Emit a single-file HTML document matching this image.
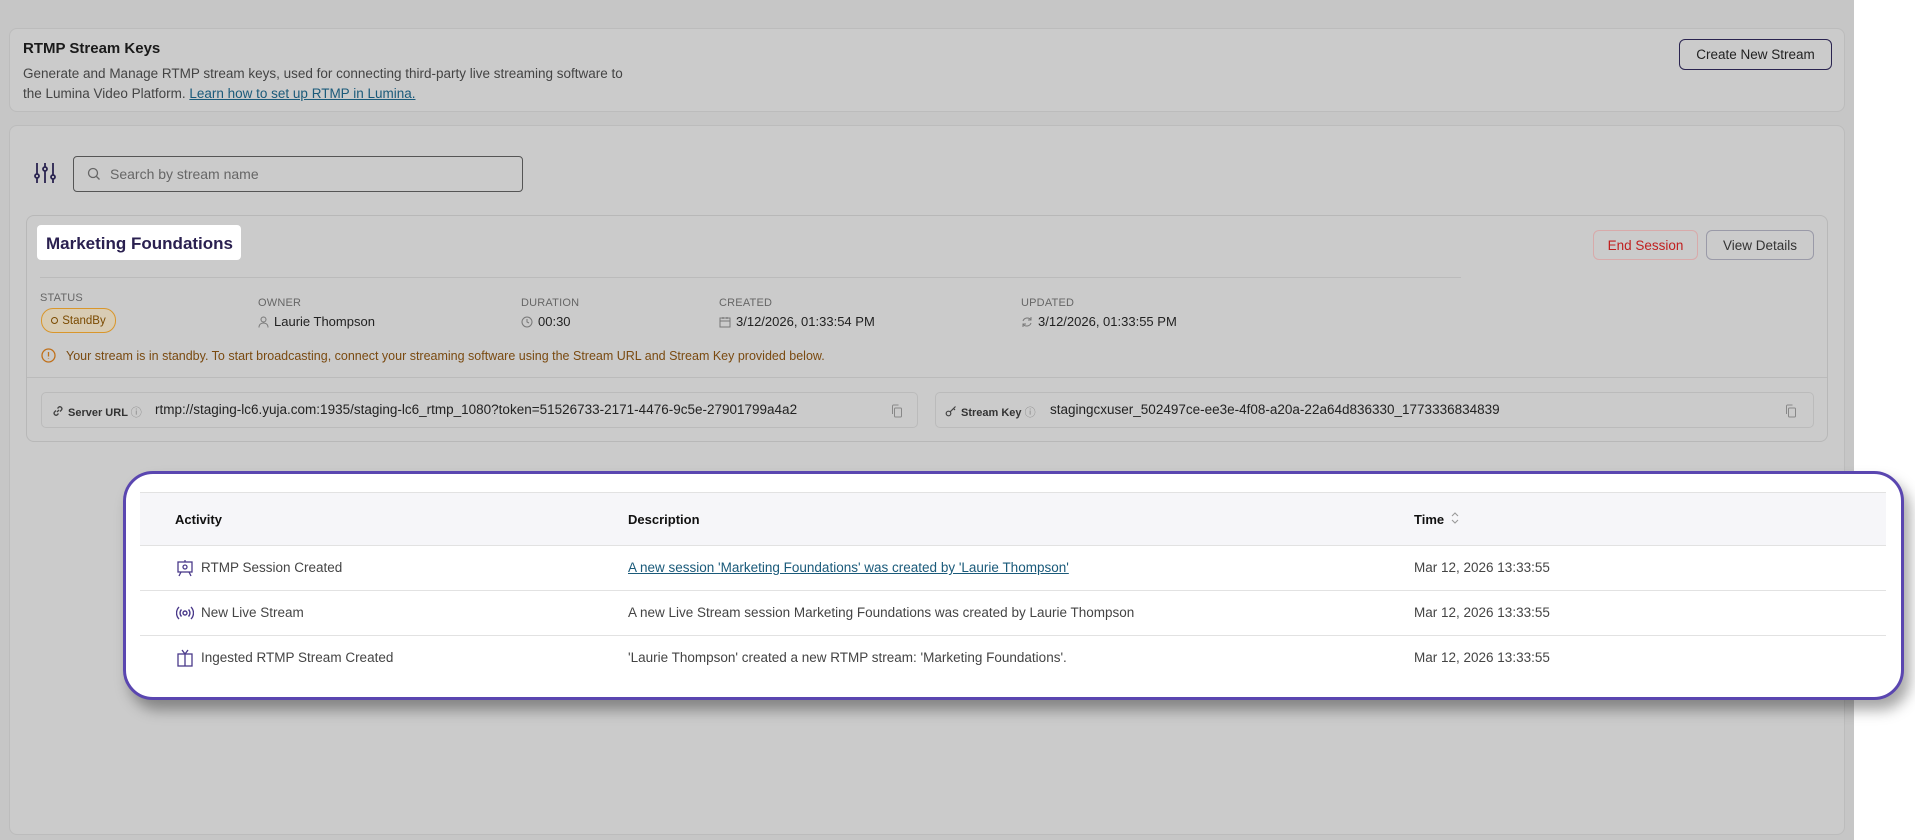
<!DOCTYPE html>
<html><head><meta charset="utf-8"><style>
*{box-sizing:border-box;margin:0;padding:0}
body{width:1915px;height:840px;overflow:hidden;background:#c6c6c6;font-family:"Liberation Sans",sans-serif;position:relative;color:#333}
.a{position:absolute}
.strip{left:1854px;top:0;width:61px;height:840px;background:#fff}
.card{background:#cbcbcb;border:1px solid #bcbcbc;border-radius:8px}
.lbl{font-size:11px;color:#666;letter-spacing:.2px}
.val{font-size:13px;color:#222;display:flex;align-items:center;gap:5px}
.btn{border-radius:6px;font-size:13.5px;display:flex;align-items:center;justify-content:center}
.row{position:absolute;left:140px;width:1746px;height:45px;border-bottom:1px solid #e2e2e2;font-size:13.5px;color:#444}
.row span{position:absolute;top:14px}
</style></head><body>
<div class="a strip"></div>
<div class="a card" style="left:9px;top:28px;width:1836px;height:84px"></div>
<div class="a" style="left:23px;top:40px;font-size:15px;font-weight:bold;color:#1a1a1a">RTMP Stream Keys</div>
<div class="a" style="left:23px;top:64px;font-size:13.5px;color:#444;line-height:20px">Generate and Manage RTMP stream keys, used for connecting third-party live streaming software to<br>the Lumina Video Platform. <span style="color:#1a5a7a;text-decoration:underline">Learn how to set up RTMP in Lumina.</span></div>
<div class="a btn" style="left:1679px;top:39px;width:153px;height:31px;border:1.5px solid #2a2450;color:#222">Create New Stream</div>

<div class="a card" style="left:9px;top:125px;width:1836px;height:710px"></div>
<svg class="a" style="left:33px;top:161px" width="24" height="24" viewBox="0 0 24 24" fill="none" stroke="#2a2450" stroke-width="1.8"><path d="M4 2v20M12 2v20M20 2v20"/><circle cx="4" cy="15" r="2" fill="#cbcbcb"/><circle cx="12" cy="8" r="2" fill="#cbcbcb"/><circle cx="20" cy="16" r="2" fill="#cbcbcb"/></svg>
<div class="a" style="left:73px;top:156px;width:450px;height:36px;border:1.5px solid #555;border-radius:4px"></div>
<svg class="a" style="left:87px;top:167px" width="14" height="14" viewBox="0 0 14 14" fill="none" stroke="#666" stroke-width="1.3"><circle cx="6" cy="6" r="4.5"/><path d="M9.5 9.5l3 3"/></svg>
<div class="a" style="left:110px;top:166px;font-size:14px;color:#666">Search by stream name</div>

<div class="a card" style="left:26px;top:215px;width:1802px;height:227px;border-color:#b8b8b8"></div>
<div class="a" style="left:37px;top:225px;width:204px;height:35px;background:#fff;border-radius:4px"></div>
<div class="a" style="left:46px;top:234px;font-size:17px;font-weight:bold;color:#2a2050">Marketing Foundations</div>
<div class="a btn" style="left:1593px;top:230px;width:105px;height:30px;border:1px solid #d8aaaa;color:#c02020">End Session</div>
<div class="a btn" style="left:1706px;top:230px;width:108px;height:30px;border:1px solid #9a9aa8;color:#333">View Details</div>
<div class="a" style="left:40px;top:277px;width:1421px;height:1px;background:#bbb"></div>

<div class="a lbl" style="left:40px;top:292px">STATUS</div>
<div class="a" style="left:41px;top:308px;width:75px;height:25px;border:1.5px solid #d9962b;border-radius:12px;background:#d8ccb4;font-size:11.5px;color:#7a4a00;display:flex;align-items:center;justify-content:center;gap:4px"><span style="width:7px;height:7px;border:1.3px solid #7a4a00;border-radius:50%;display:inline-block"></span>StandBy</div>
<div class="a lbl" style="left:258px;top:297px">OWNER</div>
<div class="a val" style="left:258px;top:314px"><svg width="11" height="12" viewBox="0 0 11 12" fill="none" stroke="#777"><circle cx="5.5" cy="3.5" r="2.5"/><path d="M1 11.5c0-3 2-4.5 4.5-4.5S10 8.5 10 11.5"/></svg>Laurie Thompson</div>
<div class="a lbl" style="left:521px;top:297px">DURATION</div>
<div class="a val" style="left:521px;top:314px"><svg width="12" height="12" viewBox="0 0 12 12" fill="none" stroke="#777"><circle cx="6" cy="6" r="5"/><path d="M6 3v3l2 1"/></svg>00:30</div>
<div class="a lbl" style="left:719px;top:297px">CREATED</div>
<div class="a val" style="left:719px;top:314px"><svg width="12" height="12" viewBox="0 0 12 12" fill="none" stroke="#777"><rect x="1" y="2" width="10" height="9"/><path d="M1 5h10M4 1v2M8 1v2"/></svg>3/12/2026, 01:33:54 PM</div>
<div class="a lbl" style="left:1021px;top:297px">UPDATED</div>
<div class="a val" style="left:1021px;top:314px"><svg width="12" height="12" viewBox="0 0 12 12" fill="none" stroke="#777"><path d="M10 4a4.5 4.5 0 0 0-8 1M2 8a4.5 4.5 0 0 0 8-1M10 1v3H7M2 11V8h3"/></svg>3/12/2026, 01:33:55 PM</div>

<svg class="a" style="left:41px;top:348px" width="15" height="15" viewBox="0 0 15 15" fill="none" stroke="#c0701a" stroke-width="1.3"><circle cx="7.5" cy="7.5" r="6.5"/><path d="M7.5 4v4.5M7.5 10.5v.5"/></svg>
<div class="a" style="left:66px;top:349px;font-size:12.5px;color:#7a4a10">Your stream is in standby. To start broadcasting, connect your streaming software using the Stream URL and Stream Key provided below.</div>
<div class="a" style="left:27px;top:377px;width:1800px;height:1px;background:#bbb"></div>

<div class="a" style="left:41px;top:392px;width:877px;height:36px;border:1px solid #bbb;border-radius:5px"></div>
<svg class="a" style="left:52px;top:405px" width="12" height="12" viewBox="0 0 12 12" fill="none" stroke="#444" stroke-width="1.3"><path d="M5 7l2-2M4 5.5L2.5 7a2 2 0 0 0 2.8 2.8L6.5 8.5M8 6.5L9.5 5a2 2 0 0 0-2.8-2.8L5.5 3.5"/></svg>
<div class="a" style="left:68px;top:404px;font-size:11px;font-weight:bold;color:#333">Server URL <span style="font-weight:normal;color:#888">ⓘ</span></div>
<div class="a" style="left:155px;top:402px;font-size:13.5px;color:#222">rtmp://staging-lc6.yuja.com:1935/staging-lc6_rtmp_1080?token=51526733-2171-4476-9c5e-27901799a4a2</div>
<svg class="a" style="left:891px;top:404px" width="12" height="14" viewBox="0 0 12 14" fill="none" stroke="#888"><rect x="3.5" y="4" width="7" height="9" rx="1"/><path d="M1.5 10V2a1 1 0 0 1 1-1h5"/></svg>
<div class="a" style="left:935px;top:392px;width:879px;height:36px;border:1px solid #bbb;border-radius:5px"></div>
<svg class="a" style="left:945px;top:405px" width="12" height="12" viewBox="0 0 12 12" fill="none" stroke="#444" stroke-width="1.2"><circle cx="3.5" cy="8.5" r="2.3"/><path d="M5.2 6.8L10.5 1.5M8.5 3.5l1.5 1.5"/></svg>
<div class="a" style="left:961px;top:404px;font-size:11px;font-weight:bold;color:#333">Stream Key <span style="font-weight:normal;color:#888">ⓘ</span></div>
<div class="a" style="left:1050px;top:402px;font-size:13.5px;color:#222">stagingcxuser_502497ce-ee3e-4f08-a20a-22a64d836330_1773336834839</div>
<svg class="a" style="left:1785px;top:404px" width="12" height="14" viewBox="0 0 12 14" fill="none" stroke="#888"><rect x="3.5" y="4" width="7" height="9" rx="1"/><path d="M1.5 10V2a1 1 0 0 1 1-1h5"/></svg>

<div class="a" style="left:123px;top:471px;width:1781px;height:229px;background:#fff;border:3px solid #5a46b0;border-radius:30px;box-shadow:6px 10px 14px rgba(0,0,0,.35)"></div>
<div class="a" style="left:140px;top:492px;width:1746px;height:54px;background:#f6f6f9;border-top:1px solid #e2e2e2;border-bottom:1px solid #e2e2e2"></div>
<div class="a" style="left:175px;top:512px;font-size:13px;font-weight:bold;color:#111">Activity</div>
<div class="a" style="left:628px;top:512px;font-size:13px;font-weight:bold;color:#111">Description</div>
<div class="a" style="left:1414px;top:512px;font-size:13px;font-weight:bold;color:#111">Time</div>
<svg class="a" style="left:1450px;top:510px" width="10" height="16" viewBox="0 0 10 16" fill="none" stroke="#999" stroke-width="1.1"><path d="M2 6l3-3 3 3M2 10l3 3 3-3"/></svg>
<div class="row" style="top:546px"><svg style="position:absolute;left:37px;top:13px" width="16" height="18" viewBox="0 0 16 18" fill="none" stroke="#4a3a8a" stroke-width="1.3"><rect x="1" y="3" width="14" height="10"/><circle cx="8" cy="8" r="2"/><path d="M8 1v2M4 13l-2 4M12 13l2 4"/></svg><span style="left:61px">RTMP Session Created</span><span style="left:488px;color:#1a5a7a;text-decoration:underline">A new session 'Marketing Foundations' was created by 'Laurie Thompson'</span><span style="left:1274px">Mar 12, 2026 13:33:55</span></div>
<div class="row" style="top:591px"><svg style="position:absolute;left:36px;top:14px" width="18" height="16" viewBox="0 0 18 16" fill="none" stroke="#4a3a8a" stroke-width="1.4"><circle cx="9" cy="8" r="2"/><path d="M5.5 4.5a5 5 0 0 0 0 7M12.5 4.5a5 5 0 0 1 0 7M3 2a8.5 8.5 0 0 0 0 12M15 2a8.5 8.5 0 0 1 0 12"/></svg><span style="left:61px">New Live Stream</span><span style="left:488px">A new Live Stream session Marketing Foundations was created by Laurie Thompson</span><span style="left:1274px">Mar 12, 2026 13:33:55</span></div>
<div class="row" style="top:636px;border-bottom:none"><svg style="position:absolute;left:37px;top:13px" width="16" height="18" viewBox="0 0 16 18" fill="none" stroke="#4a3a8a" stroke-width="1.3"><rect x="1" y="5" width="14" height="12"/><path d="M8 5v12M5 1l3 4 3-4"/></svg><span style="left:61px">Ingested RTMP Stream Created</span><span style="left:488px">'Laurie Thompson' created a new RTMP stream: 'Marketing Foundations'.</span><span style="left:1274px">Mar 12, 2026 13:33:55</span></div>
</body></html>
